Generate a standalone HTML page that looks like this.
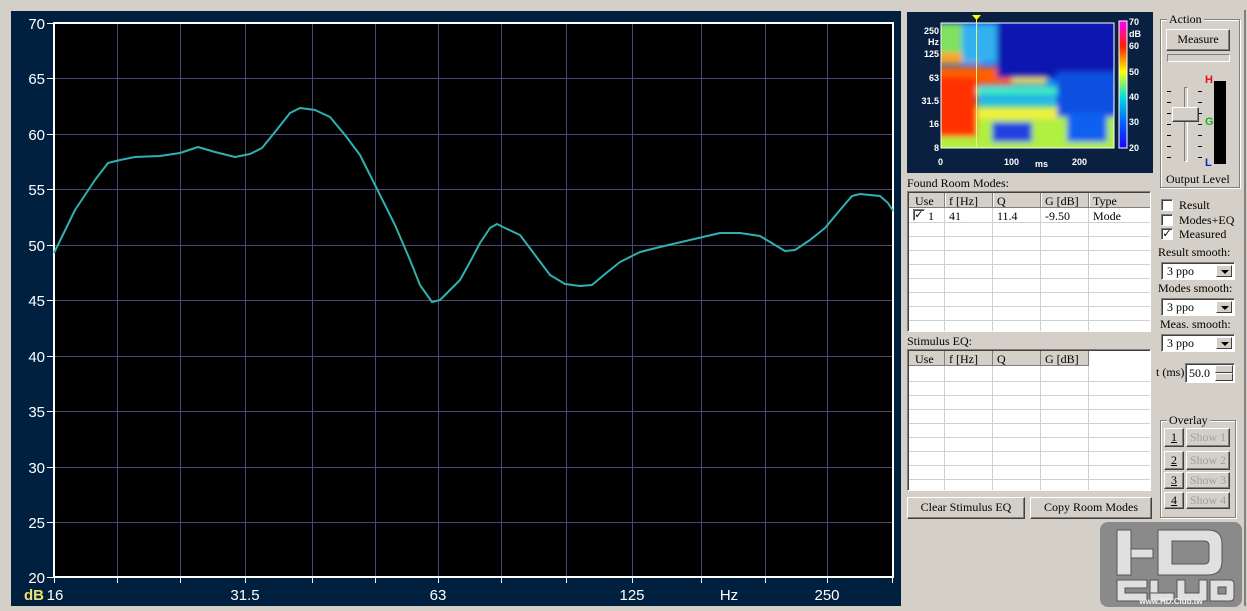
<!DOCTYPE html>
<html><head><meta charset="utf-8"><style>
*{margin:0;padding:0;box-sizing:border-box}
body{width:1247px;height:611px;background:#d4d0c8;position:relative;overflow:hidden;font-family:"Liberation Serif",serif;font-size:12px;color:#000}
.a{position:absolute}
.btn{position:absolute;background:#d4d0c8;border:1px solid;border-color:#fff #404040 #404040 #fff;box-shadow:inset -1px -1px 0 #808080;text-align:center;line-height:19px}
.sunk{position:absolute;background:#fff;border:1px solid;border-color:#808080 #fff #fff #808080;box-shadow:inset 1px 1px 0 #404040}
.grp{position:absolute;border:1px solid #808080;box-shadow:1px 1px 0 #fff,inset 1px 1px 0 #fff}
.grp>span{position:absolute;top:-8px;left:6px;background:#d4d0c8;padding:0 2px;line-height:14px}
.cb{position:absolute;width:12px;height:12px;background:#fff;border:1px solid;border-color:#808080 #fff #fff #808080;box-shadow:inset 1px 1px 0 #404040;font-size:11px;line-height:10px;text-align:center;font-family:"DejaVu Sans",sans-serif}
.lbl{position:absolute;line-height:14px;white-space:nowrap}
.combo{position:absolute;height:18px;width:74px}
.combo .ar{position:absolute;right:2px;top:2px;width:16px;height:12px;background:#d4d0c8;border:1px solid;border-color:#fff #404040 #404040 #fff}
.combo .ar:after{content:"";position:absolute;left:4px;top:4px;border:4px solid transparent;border-top:4px solid #000;border-bottom:0}
.combo .t{position:absolute;left:5px;top:1px;line-height:14px}
</style></head><body>

<svg class="a" style="left:0;top:0" width="905" height="611">
<rect x="11" y="11" width="890" height="595" fill="#002040"/>
<rect x="54" y="23" width="839" height="554" fill="#000"/>
<g stroke="#4a4878" stroke-width="1">
<line x1="117.5" y1="23" x2="117.5" y2="577"/><line x1="180.5" y1="23" x2="180.5" y2="577"/><line x1="245.5" y1="23" x2="245.5" y2="577"/><line x1="312.5" y1="23" x2="312.5" y2="577"/><line x1="375.5" y1="23" x2="375.5" y2="577"/><line x1="438.5" y1="23" x2="438.5" y2="577"/><line x1="501.5" y1="23" x2="501.5" y2="577"/><line x1="566.5" y1="23" x2="566.5" y2="577"/><line x1="632.5" y1="23" x2="632.5" y2="577"/><line x1="701.5" y1="23" x2="701.5" y2="577"/><line x1="765.5" y1="23" x2="765.5" y2="577"/><line x1="827.5" y1="23" x2="827.5" y2="577"/>
<line x1="54" y1="78.5" x2="893" y2="78.5"/><line x1="54" y1="134.5" x2="893" y2="134.5"/><line x1="54" y1="189.5" x2="893" y2="189.5"/><line x1="54" y1="245.5" x2="893" y2="245.5"/><line x1="54" y1="300.5" x2="893" y2="300.5"/><line x1="54" y1="356.5" x2="893" y2="356.5"/><line x1="54" y1="411.5" x2="893" y2="411.5"/><line x1="54" y1="467.5" x2="893" y2="467.5"/><line x1="54" y1="522.5" x2="893" y2="522.5"/>
</g>
<rect x="54" y="23" width="839" height="554" fill="none" stroke="#fff" stroke-width="2"/>
<g stroke="#fff" stroke-width="1">
<path d="M47 23.5h6M47 78.5h6M47 134.5h6M47 189.5h6M47 245.5h6M47 300.5h6M47 356.5h6M47 411.5h6M47 467.5h6M47 522.5h6M47 577.5h6"/>
<path d="M54.5 578v5M117.5 578v5M180.5 578v5M245.5 578v5M312.5 578v5M375.5 578v5M438.5 578v5M501.5 578v5M566.5 578v5M632.5 578v5M701.5 578v5M765.5 578v5M827.5 578v5M892.5 578v5"/>
</g>
<g fill="#fff" font-family="Liberation Sans,sans-serif" font-size="15" text-anchor="end">
<text x="45" y="29">70</text><text x="45" y="84">65</text><text x="45" y="140">60</text><text x="45" y="195">55</text><text x="45" y="251">50</text><text x="45" y="306">45</text><text x="45" y="362">40</text><text x="45" y="417">35</text><text x="45" y="473">30</text><text x="45" y="528">25</text><text x="45" y="583">20</text>
</g>
<g fill="#fff" font-family="Liberation Sans,sans-serif" font-size="15" text-anchor="middle">
<text x="55" y="600">16</text><text x="245" y="600">31.5</text><text x="438" y="600">63</text><text x="632" y="600">125</text><text x="729" y="600">Hz</text><text x="827" y="600">250</text>
</g>
<text x="24" y="600" fill="#f0e070" font-family="Liberation Sans,sans-serif" font-size="15" font-weight="bold">dB</text>
<polyline fill="none" stroke="#30b0b0" stroke-width="2" stroke-linejoin="round" points="54,253 75,210 95,180 108,163 120,160 135,157 160,156 180,153 198,147 215,152 235,157 250,154 262,148 275,132 290,113 300,108 315,110 330,117 345,135 360,155 375,185 395,225 410,260 420,285 432,302 440,300 448,292 460,280 470,262 480,243 490,228 497,224 505,228 520,235 535,255 550,275 565,284 580,286 592,285 605,274 620,262 640,252 660,247 690,240 720,233 740,233 760,236 775,245 785,251 795,250 810,240 825,228 840,210 852,196 860,194 870,195 880,196 888,203 893,211"/>
</svg>

<svg class="a" style="left:907;top:12" width="246" height="161">
<defs>
<linearGradient id="v" x1="0" y1="0" x2="0" y2="1"><stop offset="0" stop-color="#0a20d0"/><stop offset=".45" stop-color="#1080f0"/><stop offset=".7" stop-color="#30d0e0"/><stop offset="1" stop-color="#a0f060"/></linearGradient>
<linearGradient id="cb" x1="0" y1="1" x2="0" y2="0"><stop offset="0" stop-color="#2000ff"/><stop offset=".2" stop-color="#0060ff"/><stop offset=".4" stop-color="#00e0e0"/><stop offset=".6" stop-color="#ffff00"/><stop offset=".8" stop-color="#ff2000"/><stop offset="1" stop-color="#ff00ff"/></linearGradient>
<filter id="bl" filterUnits="userSpaceOnUse" x="0" y="0" width="246" height="161"><feGaussianBlur stdDeviation="3"/></filter>
<clipPath id="cp"><rect x="34" y="11" width="173" height="125"/></clipPath>
</defs>
<rect width="246" height="161" fill="#0a2040"/>
<g clip-path="url(#cp)">
<rect x="34" y="11" width="173" height="125" fill="url(#v)"/>
<g filter="url(#bl)">
<rect x="30" y="105" width="180" height="35" fill="#b0f040"/>
<rect x="30" y="95" width="120" height="12" fill="#f0f040"/>
<rect x="30" y="75" width="120" height="8" fill="#40f0c0"/>
<rect x="30" y="62" width="110" height="10" fill="#f0e040"/>
<rect x="30" y="55" width="75" height="18" fill="#ff6000"/>
<rect x="30" y="65" width="40" height="60" fill="#ff3000"/>
<rect x="30" y="40" width="45" height="12" fill="#ffa020"/>
<rect x="30" y="11" width="25" height="30" fill="#80e060"/>
<rect x="55" y="11" width="35" height="40" fill="#30b0f0"/>
<rect x="90" y="11" width="120" height="55" fill="#0818b0"/>
<rect x="150" y="60" width="60" height="45" fill="#1050e0"/>
<rect x="85" y="110" width="40" height="20" fill="#2040e0"/>
<rect x="160" y="100" width="40" height="30" fill="#1060f0"/>
</g>
</g>
<rect x="34" y="11" width="173" height="125" fill="none" stroke="#fff"/>
<line x1="69.5" y1="6" x2="69.5" y2="136" stroke="#f0f080"/>
<path d="M65 3h9l-4.5 5z" fill="#ff0"/>
<rect x="212" y="9" width="8" height="127" fill="url(#cb)" stroke="#fff"/>
<g fill="#fff" font-family="Liberation Sans,sans-serif" font-size="9" font-weight="bold">
<text x="222" y="13">70</text><text x="222" y="25">dB</text><text x="222" y="37">60</text><text x="222" y="63">50</text><text x="222" y="88">40</text><text x="222" y="113">30</text><text x="222" y="139">20</text>
<g text-anchor="end"><text x="32" y="22">250</text><text x="32" y="33">Hz</text><text x="32" y="45">125</text><text x="32" y="69">63</text><text x="32" y="92">31.5</text><text x="32" y="115">16</text><text x="32" y="139">8</text></g>
<text x="31" y="153">0</text><text x="97" y="153">100</text><text x="128" y="155">ms</text><text x="165" y="153">200</text>
</g>
</svg>

<div class="lbl" style="left:907px;top:176px">Found Room Modes:</div>
<div class="sunk" style="left:907px;top:191px;width:244px;height:141px;overflow:hidden">
<svg class="a" style="left:1px;top:1px" width="242" height="139">
<g stroke="#d0d0d0"><path d="M35.5 15v124M83.5 15v124M131.5 15v124M179.5 15v124M0 29.5h242M0 43.5h242M0 57.5h242M0 71.5h242M0 85.5h242M0 99.5h242M0 113.5h242M0 127.5h242"/></g>
<rect width="242" height="15" fill="#d4d0c8"/>
<g stroke="#808080"><path d="M35.5 0v15M83.5 0v15M131.5 0v15M179.5 0v15M0 14.5h242"/></g>
<g stroke="#fff"><path d="M36.5 0v14M84.5 0v14M132.5 0v14M180.5 0v14"/></g>
<g font-family="Liberation Serif,serif" font-size="12"><text x="6" y="12">Use</text><text x="40" y="12">f [Hz]</text><text x="88" y="12">Q</text><text x="136" y="12">G [dB]</text><text x="184" y="12">Type</text>
<text x="19" y="27">1</text><text x="40" y="27">41</text><text x="88" y="27">11.4</text><text x="136" y="27">-9.50</text><text x="184" y="27">Mode</text></g>
</svg>
<div class="cb" style="left:5px;top:17px">✓</div>
</div>

<div class="lbl" style="left:907px;top:334px">Stimulus EQ:</div>
<div class="sunk" style="left:907px;top:349px;width:244px;height:142px;overflow:hidden">
<svg class="a" style="left:1px;top:1px" width="242" height="140">
<g stroke="#d0d0d0"><path d="M35.5 15v125M83.5 15v125M131.5 15v125M179.5 15v125M0 30.5h242M0 44.5h242M0 58.5h242M0 72.5h242M0 86.5h242M0 100.5h242M0 114.5h242M0 128.5h242"/></g>
<rect width="180" height="15" fill="#d4d0c8"/>
<g stroke="#808080"><path d="M35.5 0v15M83.5 0v15M131.5 0v15M179.5 0v15M0 14.5h180"/></g>
<g font-family="Liberation Serif,serif" font-size="12"><text x="6" y="12">Use</text><text x="40" y="12">f [Hz]</text><text x="88" y="12">Q</text><text x="136" y="12">G [dB]</text></g>
</svg>
</div>
<div class="btn" style="left:907px;top:497px;width:118px;height:22px">Clear Stimulus EQ</div>
<div class="btn" style="left:1030px;top:497px;width:122px;height:22px">Copy Room Modes</div>

<div class="grp" style="left:1160px;top:19px;width:80px;height:169px"><span>Action</span></div>
<div class="btn" style="left:1166px;top:29px;width:64px;height:22px">Measure</div>
<div class="a" style="left:1167px;top:54px;width:63px;height:8px;border:1px solid;border-color:#808080 #fff #fff #808080"></div>
<div class="a" style="left:1184px;top:87px;width:4px;height:75px;border:1px solid;border-color:#808080 #fff #fff #808080"></div>
<svg class="a" style="left:1165px;top:85px" width="40" height="80"><g stroke="#000"><path d="M2 6.5h4M2 17.5h4M2 28.5h4M2 39.5h4M2 50.5h4M2 61.5h4M2 72.5h4M33 6.5h4M33 17.5h4M33 28.5h4M33 39.5h4M33 50.5h4M33 61.5h4M33 72.5h4"/></g></svg>
<div class="btn" style="left:1172px;top:107px;width:27px;height:15px"></div>
<div class="a" style="left:1214px;top:81px;width:12px;height:83px;background:#000"></div>
<div class="a" style="left:1205px;top:74px;color:#e01020;font:bold 11px 'Liberation Sans',sans-serif">H</div>
<div class="a" style="left:1205px;top:116px;color:#20b020;font:bold 11px 'Liberation Sans',sans-serif">G</div>
<div class="a" style="left:1205px;top:157px;color:#1020d0;font:bold 11px 'Liberation Sans',sans-serif">L</div>
<div class="lbl" style="left:1166px;top:172px">Output Level</div>

<div class="cb" style="left:1161px;top:199px"></div><div class="lbl" style="left:1179px;top:198px">Result</div>
<div class="cb" style="left:1161px;top:214px"></div><div class="lbl" style="left:1179px;top:213px">Modes+EQ</div>
<div class="cb" style="left:1161px;top:228px">✓</div><div class="lbl" style="left:1179px;top:227px">Measured</div>

<div class="lbl" style="left:1158px;top:245px">Result smooth:</div>
<div class="combo sunk" style="left:1161px;top:262px"><span class="t">3 ppo</span><div class="ar"></div></div>
<div class="lbl" style="left:1158px;top:281px">Modes smooth:</div>
<div class="combo sunk" style="left:1161px;top:298px"><span class="t">3 ppo</span><div class="ar"></div></div>
<div class="lbl" style="left:1160px;top:317px">Meas. smooth:</div>
<div class="combo sunk" style="left:1161px;top:334px"><span class="t">3 ppo</span><div class="ar"></div></div>
<div class="lbl" style="left:1156px;top:365px">t (ms)</div>
<div class="sunk" style="left:1185px;top:363px;width:50px;height:20px"><span class="a" style="left:3px;top:2px;line-height:14px">50.0</span>
<div class="a" style="left:29px;top:1px;width:18px;height:8px;background:#d4d0c8;border:1px solid;border-color:#fff #404040 #404040 #fff"></div>
<div class="a" style="left:29px;top:9px;width:18px;height:8px;background:#d4d0c8;border:1px solid;border-color:#fff #404040 #404040 #fff"></div></div>

<div class="grp" style="left:1160px;top:420px;width:76px;height:98px"><span>Overlay</span></div>
<div class="btn" style="left:1164px;top:428px;width:20px;height:19px;text-decoration:underline;line-height:17px">1</div>
<div class="btn" style="left:1186px;top:428px;width:44px;height:19px;color:#a0a0a0;line-height:17px">Show 1</div>
<div class="btn" style="left:1164px;top:451px;width:20px;height:19px;text-decoration:underline;line-height:17px">2</div>
<div class="btn" style="left:1186px;top:451px;width:44px;height:19px;color:#a0a0a0;line-height:17px">Show 2</div>
<div class="btn" style="left:1164px;top:472px;width:20px;height:17px;text-decoration:underline;line-height:15px">3</div>
<div class="btn" style="left:1186px;top:472px;width:44px;height:17px;color:#a0a0a0;line-height:15px">Show 3</div>
<div class="btn" style="left:1164px;top:492px;width:20px;height:17px;text-decoration:underline;line-height:15px">4</div>
<div class="btn" style="left:1186px;top:492px;width:44px;height:17px;color:#a0a0a0;line-height:15px">Show 4</div>

<div class="a" style="left:1244px;top:10px;width:2px;height:596px;background:#808080"></div>

<svg class="a" style="left:1100px;top:522px" width="142" height="85">
<rect x="0" y="0" width="142" height="85" rx="8" fill="#8a8a8a"/>
<g fill="#e0e0e0" stroke="#555" stroke-width="1">
<rect x="17" y="8" width="14" height="45"/><rect x="31" y="27" width="22" height="9"/><path d="M58 8h50q14 0 14 14v17q0 14-14 14h-50z M72 19v23h32q5 0 5-5v-13q0-5-5-5z" fill-rule="evenodd"/>
<path d="M17 58h30v8h-22v5h22v8h-30z"/><rect x="50" y="58" width="8" height="21"/><rect x="50" y="71" width="24" height="8"/><path d="M77 58h8v13h14v-13h8v21h-30z"/><path d="M110 58h20q4 0 4 4v13q0 4-4 4h-20zM118 65v7h8v-7z" fill-rule="evenodd"/>
</g>
<text x="71" y="82" fill="#f0f0f0" font-family="Liberation Sans,sans-serif" font-size="8" font-weight="bold" text-anchor="middle">www.HD.Club.tw</text>
</svg>
</body></html>
